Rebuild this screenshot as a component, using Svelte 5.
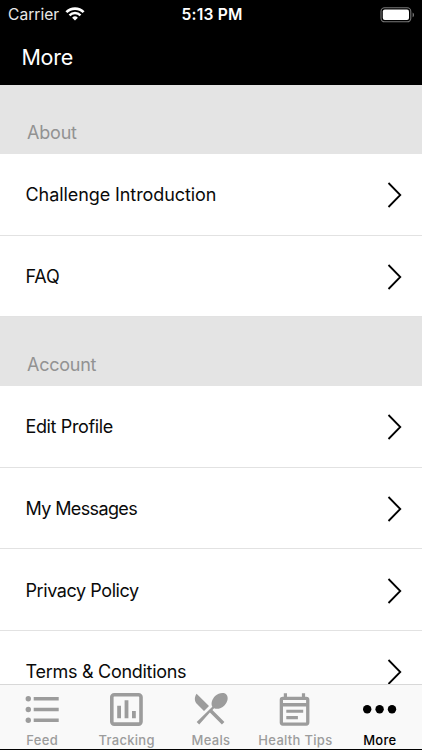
<script lang="ts">
	const sections = [
		{
			title: 'About',
			spacing: -0.2,
			items: [
				{ label: 'Challenge Introduction', spacing: -0.08 },
				{ label: 'FAQ', spacing: -0.2 }
			]
		},
		{
			title: 'Account',
			spacing: -0.25,
			items: [
				{ label: 'Edit Profile', spacing: -0.37 },
				{ label: 'My Messages', spacing: -0.62 },
				{ label: 'Privacy Policy', spacing: -0.42 },
				{ label: 'Terms & Conditions', spacing: -0.28 }
			]
		}
	];

	const tabs = [
		{ id: 'feed', label: 'Feed' },
		{ id: 'tracking', label: 'Tracking' },
		{ id: 'meals', label: 'Meals' },
		{ id: 'tips', label: 'Health Tips' },
		{ id: 'more', label: 'More' }
	];

	let active = $state('more');
</script>

<div class="screen">
	<header>
		<div class="status">
			<div class="carrier">
				<span>Carrier</span>
				<svg width="20" height="14" viewBox="0 0 20 14" fill="none" aria-hidden="true">
					<path d="M1.4 5.1a12.2 12.2 0 0 1 17.2 0" stroke="#fff" stroke-width="2.7" />
					<path d="M4.5 8.3a7.8 7.8 0 0 1 11 0" stroke="#fff" stroke-width="2.4" />
					<path d="M10 13.6 7.1 10.7a4.1 4.1 0 0 1 5.8 0z" fill="#fff" />
				</svg>
			</div>
			<span class="time">5:13 PM</span>
			<svg
				class="battery"
				width="35"
				height="16"
				viewBox="0 0 35 16"
				fill="none"
				aria-hidden="true"
			>
				<rect x="1" y="0.8" width="29.8" height="14" rx="3.6" stroke="#777" stroke-width="1.1" />
				<rect x="2.8" y="2.5" width="26.2" height="10.6" rx="2" fill="#fff" />
				<path d="M32.6 5.4c1.9.8 1.9 4 0 4.8z" fill="#777" />
			</svg>
		</div>
		<h1>More</h1>
	</header>

	<main>
		{#each sections as section}
			<h2 style:letter-spacing="{section.spacing}px">{section.title}</h2>
			<ul>
				{#each section.items as item}
					<li>
						<span style:letter-spacing="{item.spacing}px">{item.label}</span>
						<svg width="16" height="26" viewBox="0 0 16 26" fill="none" aria-hidden="true">
							<path d="M1.5 1 13.3 13 1.5 25" stroke="#000" stroke-width="1.8" />
						</svg>
					</li>
				{/each}
			</ul>
		{/each}
	</main>

	<nav>
		{#each tabs as tab}
			<button class:active={active === tab.id} onclick={() => (active = tab.id)}>
				<svg width="36" height="36" viewBox="0 0 36 36" fill="currentColor" aria-hidden="true">
					{#if tab.id === 'feed'}
						<circle cx="4.3" cy="7.7" r="2.7" />
						<circle cx="4.3" cy="18.5" r="2.7" />
						<circle cx="4.3" cy="29.2" r="2.7" />
						<path d="M9.7 5.9h25v3.6h-25zM9.7 16.7h25v3.6h-25zM9.7 27.4h25V31h-25z" />
					{:else if tab.id === 'tracking'}
						<rect
							x="2.8"
							y="3.7"
							width="29.2"
							height="29.4"
							rx="2.4"
							fill="none"
							stroke="currentColor"
							stroke-width="3.6"
						/>
						<path d="M8.2 14.7H12v12.6H8.2zM15.6 9.2h3.8v18.1h-3.8zM23 20h3.8v7.3H23z" />
					{:else if tab.id === 'meals'}
						<path d="M3.6 2.8 16 15.1 11 20.1 4 13C1.3 10.3 1.2 6.2 3.6 2.8z" />
						<path
							d="M21.1 17.2 19.4 18.9 31.4 31 28.9 33.5 16.9 21.5 6.2 33.4 3.7 30.9 19.3 15.8C17.7 12.7 18.9 8.4 22.1 5.1 25.9 1.4 31.1 1.1 33.3 3.4 35.6 5.7 35.1 10.6 31.4 14.4 28.4 17.3 24.1 18.7 21.1 17.2z"
						/>
					{:else if tab.id === 'tips'}
						<path
							fill-rule="evenodd"
							d="M6.8 2.2h3.2v3.5h14.9V2.2h3.2v3.5h1.2a3.1 3.1 0 0 1 3.1 3.1v22.8a3.1 3.1 0 0 1-3.1 3.1H5.8a3.1 3.1 0 0 1-3.1-3.1V8.8a3.1 3.1 0 0 1 3.1-3.1h1zM6 9v3.1h23.1V9zM6 15.4v16h23.1v-16z"
						/>
						<path d="M9.3 18.7h16.9v3.1H9.3zM9.3 25.1h11.6v3.1H9.3z" />
					{:else}
						<circle cx="5.2" cy="18.3" r="4.2" />
						<circle cx="17.6" cy="18.3" r="4.2" />
						<circle cx="30" cy="18.3" r="4.2" />
					{/if}
				</svg>
				<span>{tab.label}</span>
			</button>
		{/each}
	</nav>
</div>

<style>
	:global(body) {
		margin: 0;
	}

	.screen {
		display: flex;
		flex-direction: column;
		width: 422px;
		height: 750px;
		overflow: hidden;
		background: #fff;
		color: #0a0a0a;
		font-family: Inter, 'Liberation Sans', sans-serif;
	}

	header {
		flex: none;
		height: 85px;
		background: #000;
		color: #fff;
	}

	.status {
		display: grid;
		grid-template-columns: 1fr auto 1fr;
		align-items: center;
		height: 29px;
		padding: 0 7px 0 8px;
	}

	.carrier {
		display: flex;
		align-items: center;
		gap: 6px;
		font-size: 15.6px;
		color: #e8e8e8;
	}

	.carrier svg {
		margin-top: -2px;
	}

	.time {
		padding-left: 1px;
		font-size: 15.6px;
		font-weight: 600;
		letter-spacing: 0.2px;
	}

	.battery {
		justify-self: end;
	}

	h1 {
		margin: 0;
		padding-left: 21.5px;
		font-size: 21.5px;
		font-weight: 400;
		line-height: 57px;
		letter-spacing: -0.3px;
	}

	main {
		flex: 1;
		min-height: 0;
		overflow: hidden;
	}

	h2 {
		box-sizing: border-box;
		height: 69px;
		margin: 0;
		padding: 35px 27px 0;
		background: #e4e4e4;
		color: #929292;
		font-size: 18px;
		font-weight: 400;
		line-height: 26px;
	}

	ul {
		margin: 0;
		padding: 0;
		list-style: none;
	}

	li {
		display: flex;
		align-items: center;
		justify-content: space-between;
		box-sizing: border-box;
		height: 81.6px;
		padding: 1px 19px 0 25.5px;
		border-bottom: 1px solid #e2e2e2;
		font-size: 18px;
	}

	li svg {
		margin-top: 1px;
	}

	nav {
		flex: none;
		display: flex;
		box-sizing: border-box;
		height: 66px;
		border-top: 1px solid #d8d8d8;
		border-bottom: 1px solid #000;
		background: #f9f9f9;
	}

	button {
		flex: 1 1 0;
		display: flex;
		flex-direction: column;
		align-items: center;
		min-width: 0;
		padding: 6px 0 0;
		border: 0;
		background: none;
		color: #9c9c9c;
		font-family: inherit;
		font-size: 13px;
		font-weight: 500;
		line-height: 16px;
		letter-spacing: 0.3px;
		white-space: nowrap;
	}

	button svg {
		flex: none;
	}

	button span {
		margin-top: 5px;
	}

	.active {
		color: #000;
	}
</style>
